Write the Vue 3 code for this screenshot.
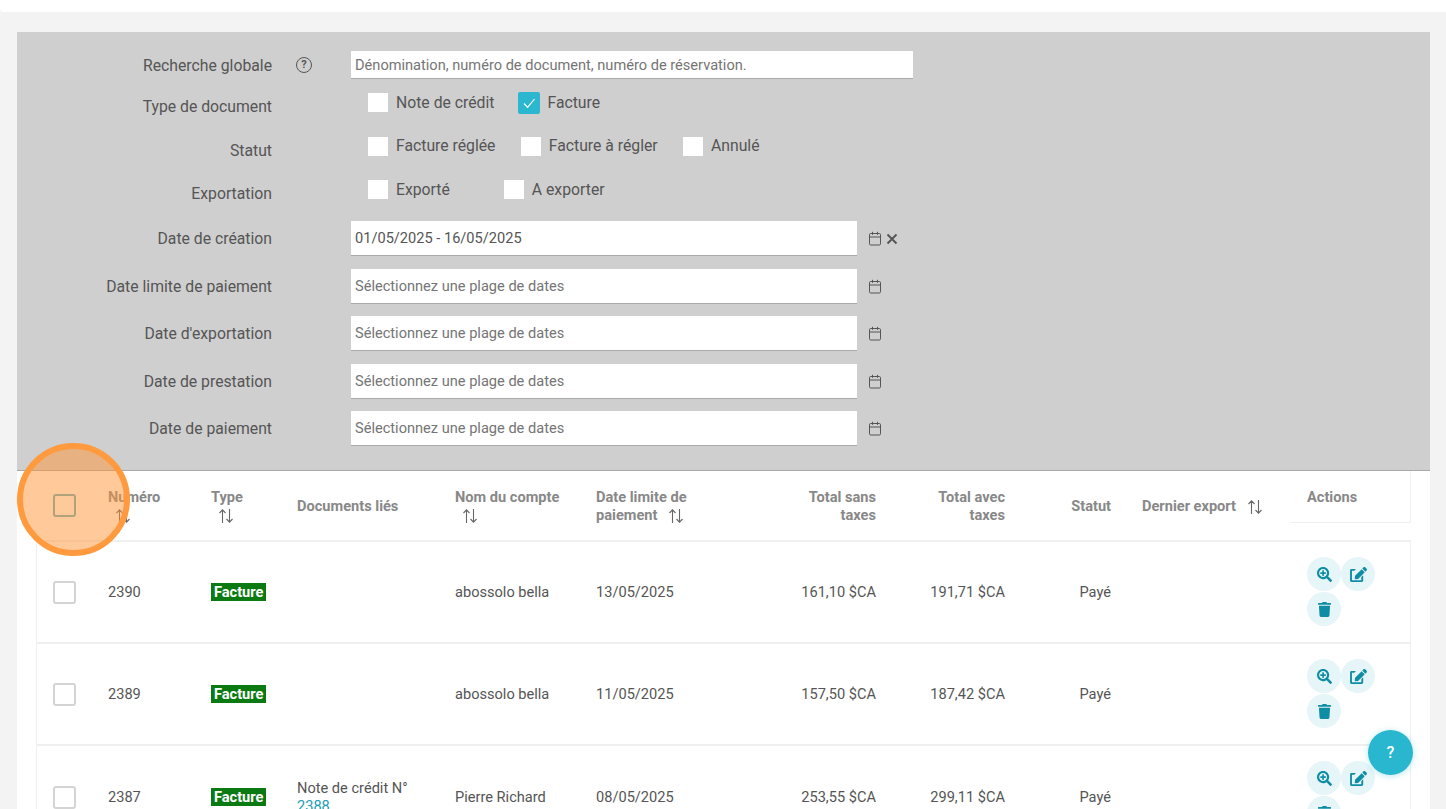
<template>
  <div class="page">
    <div class="topbar"></div>
    <div class="panel">
      <div class="filters">
        <div class="row row-search">
          <label class="lbl">Recherche globale</label>
          <span class="help-ico">?</span>
          <div class="inp inp-search placeholder">Dénomination, numéro de document, numéro de réservation.</div>
        </div>
        <div v-for="g in checkGroups" :key="g.label" class="row row-check">
          <label class="lbl lbl-check">{{ g.label }}</label>
          <div class="opts" :style="{ gap: g.gap + 'px' }">
            <div v-for="o in g.options" :key="o.text" class="opt">
              <span v-if="o.on" class="box box-on">
                <svg viewBox="0 0 20 20" width="20" height="20"><path d="M5 10.5l3.6 3.8L15.5 6" fill="none" stroke="#fff" stroke-width="1.1" /></svg>
              </span>
              <span v-else class="box"></span>
              <span class="opt-text">{{ o.text }}</span>
            </div>
          </div>
        </div>
        <div class="dates">
          <div v-for="d in dateFilters" :key="d.label" class="row row-date">
            <label class="lbl">{{ d.label }}</label>
            <div class="inp inp-date" :class="{ placeholder: !d.value }">{{ d.value || 'Sélectionnez une plage de dates' }}</div>
            <svg class="cal" viewBox="0 0 14 15" width="14" height="15">
              <rect x="1.5" y="2.5" width="11" height="11.5" rx="1.2" fill="none" stroke="#555" stroke-width="1" />
              <path d="M1.5 6h11M4.5 0.8v3M9.5 0.8v3" fill="none" stroke="#555" stroke-width="1" />
            </svg>
            <svg v-if="d.value" class="clear" viewBox="0 0 12 12" width="12" height="12">
              <path d="M1.5 1.5l9 9M10.5 1.5l-9 9" fill="none" stroke="#555" stroke-width="1.9" />
            </svg>
          </div>
        </div>
      </div>

      <div class="table">
        <div class="thead grid">
          <div class="cell"><span class="chk chk-head"></span></div>
          <div class="cell th"><div>Numéro<br /><svg class="sort sort-under" viewBox="0 0 16 16" width="16" height="16"><path d="M4.5 15V2M1.5 5l3-3.2 3 3.2M11.5 1v13M8.5 11l3 3.2 3-3.2" fill="none" stroke="#666" stroke-width="1.1" /></svg></div></div>
          <div class="cell th"><div>Type<br /><svg class="sort sort-under" viewBox="0 0 16 16" width="16" height="16"><path d="M4.5 15V2M1.5 5l3-3.2 3 3.2M11.5 1v13M8.5 11l3 3.2 3-3.2" fill="none" stroke="#666" stroke-width="1.1" /></svg></div></div>
          <div class="cell th">Documents liés</div>
          <div class="cell th"><div>Nom du compte<br /><svg class="sort sort-under" viewBox="0 0 16 16" width="16" height="16"><path d="M4.5 15V2M1.5 5l3-3.2 3 3.2M11.5 1v13M8.5 11l3 3.2 3-3.2" fill="none" stroke="#666" stroke-width="1.1" /></svg></div></div>
          <div class="cell th"><div>Date limite de<br />paiement<svg class="sort sort-side" viewBox="0 0 16 16" width="16" height="16"><path d="M4.5 15V2M1.5 5l3-3.2 3 3.2M11.5 1v13M8.5 11l3 3.2 3-3.2" fill="none" stroke="#666" stroke-width="1.1" /></svg></div></div>
          <div class="cell th right">Total sans<br />taxes</div>
          <div class="cell th right">Total avec<br />taxes</div>
          <div class="cell th right">Statut</div>
          <div class="cell th export"><span class="nowrap">Dernier export</span><svg class="sort sort-side" viewBox="0 0 16 16" width="16" height="16"><path d="M4.5 15V2M1.5 5l3-3.2 3 3.2M11.5 1v13M8.5 11l3 3.2 3-3.2" fill="none" stroke="#666" stroke-width="1.1" /></svg></div>
          <div class="th th-actions">Actions</div>
        </div>

        <div v-for="r in rows" :key="r.num" class="trow grid">
          <div class="cell"><span class="chk"></span></div>
          <div class="cell">{{ r.num }}</div>
          <div class="cell"><span class="badge">Facture</span></div>
          <div class="cell"><div v-if="r.linked" class="linked">Note de crédit N° <a class="link">{{ r.linked }}</a></div></div>
          <div class="cell">{{ r.account }}</div>
          <div class="cell">{{ r.due }}</div>
          <div class="cell right">{{ r.net }}</div>
          <div class="cell right">{{ r.gross }}</div>
          <div class="cell right">Payé</div>
          <div class="cell"></div>
          <div class="cell-actions">
            <button class="act">
              <svg viewBox="0 0 512 512" width="15" height="15"><path d="M304 192v32c0 6.6-5.4 12-12 12h-56v56c0 6.6-5.4 12-12 12h-32c-6.6 0-12-5.4-12-12v-56h-56c-6.6 0-12-5.4-12-12v-32c0-6.6 5.4-12 12-12h56v-56c0-6.6 5.4-12 12-12h32c6.6 0 12 5.4 12 12v56h56c6.6 0 12 5.4 12 12zm201 284.7L476.7 505c-9.4 9.4-24.6 9.4-33.9 0L343 405.3c-4.5-4.5-7-10.6-7-17V372c-35.3 27.6-79.7 44-128 44C93.1 416 0 322.9 0 208S93.1 0 208 0s208 93.1 208 208c0 48.3-16.4 92.7-44 128h16.3c6.4 0 12.5 2.5 17 7l99.7 99.7c9.3 9.4 9.3 24.6 0 34zM344 208c0-75.2-60.8-136-136-136S72 132.8 72 208s60.8 136 136 136 136-60.8 136-136z" /></svg>
            </button>
            <button class="act">
              <svg viewBox="0 0 576 512" width="17" height="15"><path d="M402.6 83.2l90.2 90.2c3.8 3.8 3.8 10 0 13.8L274.4 405.6l-92.8 10.3c-12.4 1.4-22.9-9.1-21.5-21.5l10.3-92.8L388.8 83.2c3.8-3.8 10-3.8 13.8 0zm162-22.9l-48.8-48.8c-15.2-15.2-39.9-15.2-55.2 0l-35.4 35.4c-3.8 3.8-3.8 10 0 13.8l90.2 90.2c3.8 3.8 10 3.8 13.8 0l35.4-35.4c15.2-15.3 15.2-40 0-55.2zM384 346.2V448H64V128h73.2c3.2 0 6.2-1.3 8.5-3.5l40-40c7.6-7.6 2.2-20.5-8.5-20.5H48C21.5 64 0 85.5 0 112v352c0 26.5 21.5 48 48 48h352c26.5 0 48-21.5 48-48V306.2c0-10.7-12.9-16-20.5-8.5l-40 40c-2.2 2.3-3.5 5.3-3.5 8.5z" /></svg>
            </button>
            <button class="act">
              <svg viewBox="0 0 448 512" width="13" height="15"><path d="M432 32H312l-9.4-18.7A24 24 0 0 0 281.1 0H166.8a23.72 23.72 0 0 0-21.4 13.3L136 32H16A16 16 0 0 0 0 48v32a16 16 0 0 0 16 16h416a16 16 0 0 0 16-16V48a16 16 0 0 0-16-16zM53.2 467a48 48 0 0 0 47.9 45h245.8a48 48 0 0 0 47.9-45L416 128H32z" /></svg>
            </button>
          </div>
        </div>
      </div>
    </div>

    <div class="spot"></div>
    <button class="fab">?</button>
  </div>
</template>

<script setup>
const checkGroups = [
  {
    label: 'Type de document',
    gap: 23,
    options: [
      { text: 'Note de crédit' },
      { text: 'Facture', on: true }
    ]
  },
  {
    label: 'Statut',
    gap: 25.3,
    options: [
      { text: 'Facture réglée' },
      { text: 'Facture à régler' },
      { text: 'Annulé' }
    ]
  },
  {
    label: 'Exportation',
    gap: 54,
    options: [
      { text: 'Exporté' },
      { text: 'A exporter' }
    ]
  }
]

const dateFilters = [
  { label: 'Date de création', value: '01/05/2025 - 16/05/2025' },
  { label: 'Date limite de paiement' },
  { label: "Date d'exportation" },
  { label: 'Date de prestation' },
  { label: 'Date de paiement' }
]

const rows = [
  { num: 2390, account: 'abossolo bella', due: '13/05/2025', net: '161,10 $CA', gross: '191,71 $CA' },
  { num: 2389, account: 'abossolo bella', due: '11/05/2025', net: '157,50 $CA', gross: '187,42 $CA' },
  { num: 2387, linked: '2388', account: 'Pierre Richard', due: '08/05/2025', net: '253,55 $CA', gross: '299,11 $CA' }
]
</script>

<style>
html,
body {
  margin: 0;
  background: #f3f3f3;
}
</style>

<style scoped>
.page {
  position: relative;
  height: 809px;
  overflow: hidden;
  background: #f3f3f3;
  font-family: Roboto, "Liberation Sans", sans-serif;
  font-size: 14.6px;
  color: #555;
}
.topbar {
  height: 12px;
  background: #fff;
  border-bottom-left-radius: 4px;
}
.panel {
  margin: 20px 16px 0 17px;
  background: #fff;
}
.filters {
  height: 439px;
  box-sizing: border-box;
  padding-top: 19px;
  background: #cfcfcf;
  border-bottom: 1px solid #a9a9a9;
}
.row {
  display: flex;
}
.lbl {
  flex: none;
  width: 255px;
  text-align: right;
  font-size: 15.75px;
}
.row-search {
  height: 32px;
  align-items: flex-start;
}
.row-search .lbl {
  line-height: 29px;
}
.help-ico {
  flex: none;
  box-sizing: border-box;
  width: 16px;
  height: 16px;
  margin: 6px 39px 0 24px;
  border: 1.6px solid #555;
  border-radius: 50%;
  font-size: 11px;
  font-weight: 700;
  line-height: 13px;
  text-align: center;
}
.inp {
  box-sizing: border-box;
  background: #fff;
  border-bottom: 1px solid #a9a9a9;
  padding-left: 4px;
  color: #555;
}
.placeholder {
  color: #757575;
}
.inp-search {
  width: 562px;
  height: 28px;
  line-height: 28px;
}
.row-check {
  height: 43.5px;
}
.lbl-check {
  line-height: 47px;
}
.opts {
  display: flex;
  align-items: flex-start;
  margin-left: 96px;
  padding-top: 8.7px;
}
.opt {
  display: flex;
  align-items: center;
  height: 22px;
  line-height: 22px;
}
.box {
  display: block;
  width: 20px;
  height: 19px;
  margin-right: 8px;
  background: #fff;
}
.box-on {
  width: 20px;
  height: 22px;
  margin-left: 1px;
  margin-right: 7px;
  padding: 0 1px;
  background: #2cb7d0;
  border-radius: 2px;
}
.box-on svg {
  display: block;
  margin-top: 1px;
}
.opt-text {
  font-size: 15.75px;
  white-space: nowrap;
}
.dates {
  display: flex;
  flex-direction: column;
  gap: 12.5px;
  margin-top: 7.7px;
}
.row-date {
  height: 35px;
  align-items: center;
}
.inp-date {
  width: 506px;
  height: 35px;
  margin-left: 79px;
  line-height: 35px;
}
.cal {
  margin-left: 11px;
}
.clear {
  margin-left: 4px;
}

.table {
  padding-left: 20px;
  padding-right: 19px;
}
.grid {
  display: grid;
  grid-template-columns: 71px 103px 86px 158px 141px 144px 136px 129px 106px 180px 120px;
}
.cell {
  display: flex;
  align-items: center;
  min-width: 0;
}
.right {
  justify-content: flex-end;
  text-align: right;
}
.thead {
  height: 69px;
  border-bottom: 2px solid #f0f0f0;
}
.th {
  font-weight: 700;
  color: #888;
  line-height: 18px;
}
.nowrap {
  white-space: nowrap;
}
.export {
  padding-left: 31px;
}
.th-actions {
  align-self: start;
  box-sizing: border-box;
  height: 52px;
  padding: 17px 0 0 16px;
  border-bottom: 1px solid #efefef;
  border-right: 1px solid #efefef;
}
.sort {
  vertical-align: top;
}
.sort-under {
  margin: 2px 0 0 7px;
}
.sort-side {
  margin: 2px 0 0 11px;
}
.trow {
  height: 102px;
  box-sizing: border-box;
  border-left: 1px solid #efefef;
  border-right: 1px solid #efefef;
  border-bottom: 2px solid #efefef;
  margin-left: -1px;
}
.trow:last-child {
  height: 104px;
}
.chk {
  display: block;
  box-sizing: border-box;
  width: 23px;
  height: 23px;
  margin-left: 16px;
  border: 2px solid #d4d4d4;
  border-radius: 3px;
  background: #fff;
}
.chk-head {
  border-color: #61b0be;
}
.badge {
  display: inline-block;
  padding: 0 3px;
  background: #0b7a12;
  color: #fff;
  font-weight: 700;
  line-height: 18px;
}
.linked {
  width: 125px;
  line-height: 18px;
}
.link {
  color: #1b9cb4;
}
.cell-actions {
  display: flex;
  flex-wrap: wrap;
  align-content: flex-start;
  row-gap: 1px;
  width: 68px;
  margin: 15px 0 0 16px;
}
.act {
  display: flex;
  align-items: center;
  justify-content: center;
  width: 34px;
  height: 34px;
  padding: 0;
  border: 0;
  border-radius: 50%;
  background: #e5f5f8;
}
.act svg {
  display: block;
  fill: #0f8da5;
}
.spot {
  position: absolute;
  left: 17px;
  top: 443px;
  box-sizing: border-box;
  width: 113px;
  height: 113px;
  border: 6px solid #ff9a3f;
  border-radius: 50%;
  background: rgba(255, 148, 54, 0.5);
}
.fab {
  position: absolute;
  left: 1368px;
  top: 730px;
  width: 45px;
  height: 45px;
  padding: 0;
  border: 0;
  border-radius: 50%;
  background: #29b6cf;
  color: #fff;
  font-family: Roboto, "Liberation Sans", sans-serif;
  font-size: 16px;
  font-weight: 500;
  box-shadow: 0 1px 6px rgba(41, 182, 207, 0.35);
}
</style>
